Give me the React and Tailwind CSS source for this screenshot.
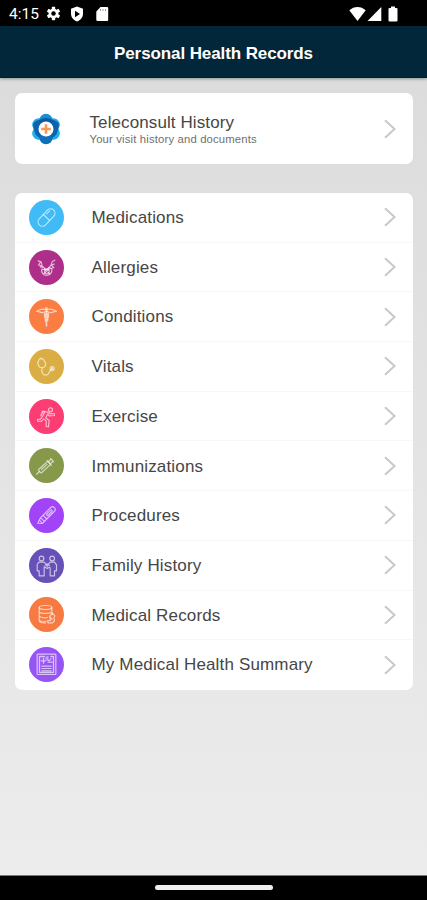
import React from "react";

const glyphs = {
  pill: (
    <g transform="rotate(-47)">
      <rect x="-31" y="-13" width="62" height="26" rx="13" />
      <path d="M0-13V13M8-7h13" />
    </g>
  ),
  allergies: (
    <g>
      <path d="M-25-20l9 3 3 12 9 9M-17-17l-7 9 11 4M25-22l-8 5-3 9-10 12M23-10l-9 3M-12 0l-7-2M14-7l8 7-8 3" />
      <path d="M-14 5c-3 10 4 18 13 19 11 0 19-8 17-20L8 0-2 7z" />
      <circle cx="1" cy="12" r="7" />
      <path d="M-8 18L10 4M-6 3L10 20" />
    </g>
  ),
  caduceus: (
    <g>
      <path d="M-30-15c9-7 17-10 28-5h4c11-5 19-2 28 5-10-1-13 5-20 3L0-16l-10 4c-7 2-10-4-20-3z" />
      <circle cx="0" cy="-24" r="3" />
      <path d="M0-20V29M-6-10v13l11 7-7 8 4 8M6-10v13L-5 10l6 8-2 7M-3-10v22M3-10v22" />
    </g>
  ),
  stethoscope: (
    <g>
      <path d="M-14-25l-6 2c-6 7-8 13-4 20 3 6 8 8 14 6 7-2 9-8 7-14l-6-10-5-2M-13 3c-3 13 0 23 12 23 10 0 8-12 15-17" />
      <circle cx="17" cy="6" r="6" />
      <circle cx="17" cy="6" r="2" />
    </g>
  ),
  runner: (
    <g>
      <circle cx="12" cy="-20" r="6" />
      <path d="M-17-2l5-14L3-13l7 5 13-1 1 6-16 1-5-5-5 11 10 8-2 19-7-1V13L-8 7l-7 7-11 1-1-6 9-1 6-8 6-11-6-1-4 9z" />
    </g>
  ),
  syringe: (
    <g transform="translate(-3 2) rotate(-42)">
      <rect x="-24" y="-6.500" width="39" height="13" rx="3" />
      <path d="M-36 0h12M15-10V10M15-4.500h12V4.500H15M27-7V7M-15-1h22" />
    </g>
  ),
  scalpel: (
    <g transform="rotate(-45)">
      <path d="M-35-2L-17-8h43c10 0 10 16 0 16h-52zM-17-8V8M-7-8V8M2-3h17c5 0 5 6 0 6H2zM-25-4v8" />
    </g>
  ),
  family: (
    <g>
      <circle cx="-15" cy="-21" r="7" />
      <circle cx="17" cy="-21" r="7" />
      <path d="M-23-10H-7L2-1l9-9h13l6 8v18h-6v15H11V7L9 5 2 9l-9-5v27h-15V16h-6V-3zM-4-1H9M2-5v9" />
    </g>
  ),
  database: (
    <g>
      <ellipse cx="-3" cy="-21" rx="19" ry="6" />
      <path d="M-22-21V18c0 6 9 8 20 7M16-21v18M-22-8c4 6 34 6 38 0M-22 5c4 5 19 6 25 4M-22 17c5 5 15 5 20 3" />
      <path d="M9 6l9-10 7 8-3 7 2 8-6 6H5l-2-6 10-2zM9 6l8 8" />
    </g>
  ),
  report: (
    <g>
      <rect x="-28" y="-31" width="56" height="61" rx="2" />
      <path d="M-21-24h15M-21-24v48h42v-48h-8M-9-18V-4M-16-11H-2" strokeWidth="4" />
      <path d="M4-24v12h5l5-6M5-7h12M-14 5h28M-14 12h28M-14 19h28M-1-22v6" />
    </g>
  ),
};

const records = [
  { label: "Medications", icon: "pill", color: "bg-[#40bbf5]" },
  { label: "Allergies", icon: "allergies", color: "bg-[#ad2f8a]" },
  { label: "Conditions", icon: "caduceus", color: "bg-[#fa7d43]" },
  { label: "Vitals", icon: "stethoscope", color: "bg-[#dbad45]" },
  { label: "Exercise", icon: "runner", color: "bg-[#fb3d74]" },
  { label: "Immunizations", icon: "syringe", color: "bg-[#86994a]" },
  { label: "Procedures", icon: "scalpel", color: "bg-[#a144f8]" },
  { label: "Family History", icon: "family", color: "bg-[#6750b8]" },
  { label: "Medical Records", icon: "database", color: "bg-[#f67a42]" },
  { label: "My Medical Health Summary", icon: "report", color: "bg-[#9654f4]" },
];

function Chevron() {
  return (
    <svg className="h-5 w-3 shrink-0" viewBox="0 0 12 20" fill="none" stroke="#c8c8c8" strokeWidth="2">
      <path d="M1 1.200L10.600 10 1 18.800" />
    </svg>
  );
}

function Logo() {
  return (
    <svg className="h-[32px] w-[30px]" viewBox="-15 -16 30 32">
      {[60, 120, 240, 300].map((a) => (
        <circle key={a} cy="-8.300" r="6.600" fill="#20aeea" transform={`rotate(${a})`} />
      ))}
      <circle cy="-8.500" r="6.700" fill="#1a8fd8" />
      <circle cy="8.500" r="6.700" fill="#0f6fb8" />
      <path d="M-13-5Q-9-11-3-8L-6 9Q-12 7-13-5z" fill="#0d62ad" />
      <path d="M13-5Q9-11 3-8L6 9Q12 7 13-5z" fill="#0d62ad" />
      <path d="M-7-9Q0-13 7-9L5-5H-5z" fill="#0b5ba4" />
      <circle r="7.500" fill="#fff" />
      <path d="M0-4.800V4.800M-4.800 0H4.800" stroke="#f79a55" strokeWidth="2.600" />
    </svg>
  );
}

function StatusBar() {
  return (
    <div className="flex h-[26px] shrink-0 items-center bg-black pt-px pr-[29px] pl-[9px] text-white">
      <span className="w-[37px] pt-[2px] font-['Roboto',sans-serif] text-[15.5px] leading-none whitespace-nowrap">4:15</span>
      <svg className="h-[15px] w-[15px]" viewBox="-8 -8 16 16" fill="#fff">
        {[0, 60, 120].map((a) => (
          <rect key={a} x="-1.800" y="-7.200" width="3.600" height="14.400" rx="0.700" transform={`rotate(${a})`} />
        ))}
        <circle r="5.200" />
        <circle r="2.400" fill="#000" />
      </svg>
      <svg className="ml-2 h-4 w-4" viewBox="0 0 16 16">
        <path d="M8 .5l6 2.300v4.700c0 4-2.600 6.900-6 8-3.400-1.100-6-4-6-8V2.800z" fill="#fff" />
        <path d="M6 4.800L11 8l-5 3.200z" fill="#000" />
      </svg>
      <svg className="ml-[9px] h-4 w-4" viewBox="0 0 16 16">
        <path d="M6.500 1H13a1.200 1.200 0 011.200 1.200v11.600A1.200 1.200 0 0113 15H3.500a1.200 1.200 0 01-1.200-1.200V5.500z" fill="#fff" />
        <path d="M6.500 3v2M9 3v2M11.500 3v2" stroke="#999" strokeWidth=".9" />
      </svg>
      <div className="ml-auto flex items-center">
        <svg className="h-4 w-[17px]" viewBox="0 0 17 16">
          <path d="M.3 4.300C5-.2 12-.2 16.700 4.300L8.500 15z" fill="#fff" />
        </svg>
        <svg className="ml-px h-4 w-[15px]" viewBox="0 0 15 16">
          <path d="M14.300 1v14H.5z" fill="#fff" />
        </svg>
        <svg className="ml-[6px] h-4 w-[10px]" viewBox="0 0 10 16">
          <path d="M3 .5h4V2h1.500q1 0 1 1v11.500q0 1-1 1h-7q-1 0-1-1V3q0-1 1-1H3z" fill="#fff" />
        </svg>
      </div>
    </div>
  );
}

export default function App() {
  return (
    <div className="flex h-[900px] w-[427px] flex-col overflow-hidden bg-black font-['Liberation_Sans',Arial,sans-serif]">
      <StatusBar />
      <header className="z-10 flex h-[52px] shrink-0 items-center justify-center border-b border-[#11133d] bg-[#02273a] pt-[4px] shadow-[0_1px_3px_rgba(0,0,0,0.35)]">
        <h1 className="text-[17px] leading-5 font-bold tracking-[-0.1px] whitespace-nowrap text-white">Personal Health Records</h1>
      </header>
      <main className="min-h-0 flex-1 bg-linear-to-b from-[#dcdcdc] to-[#ececec] px-[14.5px] pt-[15px]">
        <section className="flex h-[71px] items-center rounded-[7px] bg-white pr-[17px] pl-[16.5px]">
          <Logo />
          <div className="ml-[28.500px] flex-1 pt-px">
            <h2 className="text-[17px] leading-[19px] tracking-[0.1px] whitespace-nowrap text-[#464646]">Teleconsult History</h2>
            <p className="text-[11.3px] leading-[14px] tracking-[0.16px] whitespace-nowrap text-[#707070]">Your visit history and documents</p>
          </div>
          <Chevron />
        </section>
        <section className="mt-[29px] rounded-[7px] bg-white">
          {records.map(({ label, icon, color }) => (
            <div key={label} className="flex h-[49.7px] items-center border-b border-[#f8f8f8] pr-[17px] pl-[14.5px] last:border-transparent">
              <div className={`h-[35px] w-[35px] shrink-0 rounded-full ${color}`}>
                <svg className="h-full w-full" viewBox="-52.5 -52.5 105 105" fill="none" stroke="#fff" strokeOpacity=".65" strokeWidth="3.500" strokeLinejoin="round" strokeLinecap="round">
                  {glyphs[icon]}
                </svg>
              </div>
              <span className="ml-[27.500px] flex-1 pt-[1.500px] text-[17px] leading-5 tracking-[0.16px] whitespace-nowrap text-[#464646]">{label}</span>
              <Chevron />
            </div>
          ))}
        </section>
      </main>
      <footer className="flex h-[25px] shrink-0 items-center justify-center border-t border-[#777] bg-black pb-px">
        <div className="h-[5px] w-[118px] rounded-full bg-[#eee]" />
      </footer>
    </div>
  );
}
